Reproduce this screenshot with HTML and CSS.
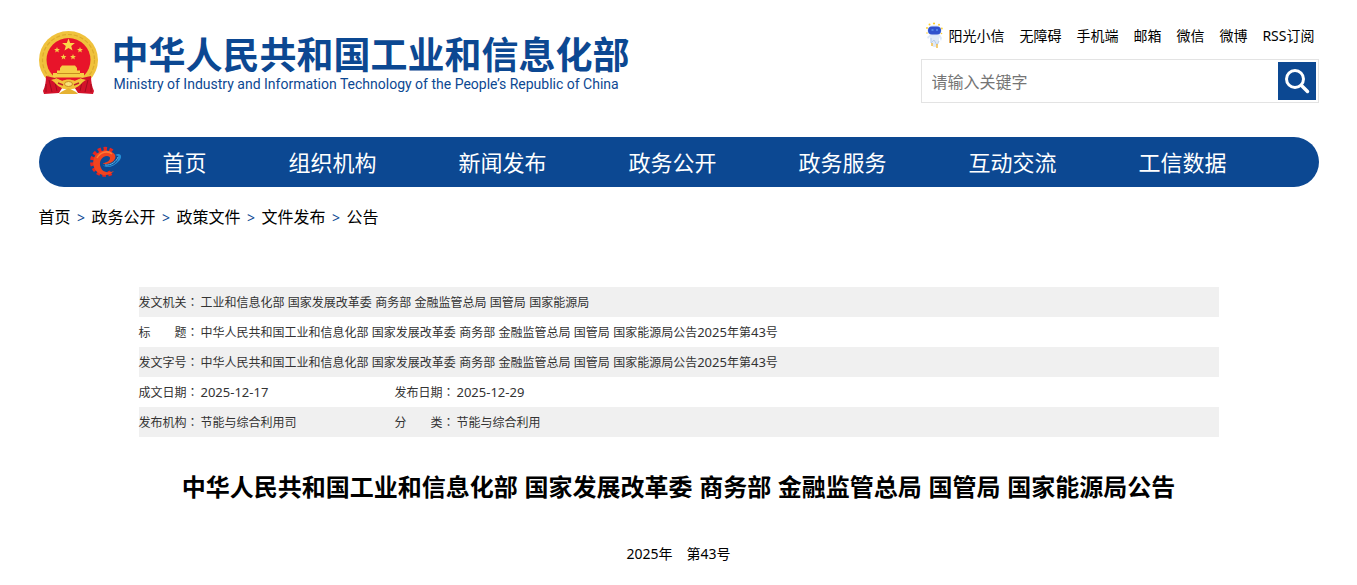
FILE: index.html
```html
<!DOCTYPE html>
<html lang="zh-CN">
<head>
<meta charset="utf-8">
<meta name="viewport" content="width=device-width, initial-scale=1">
<title>中华人民共和国工业和信息化部</title>
<link rel="stylesheet" href="styles.css">
</head>
<body>
<div class="container">
  <header class="header">
    <a class="brand" href="#">
      <svg class="emblem" viewBox="0 0 60 66" aria-hidden="true">
        <ellipse cx="29.500" cy="30" rx="29.500" ry="29" fill="#f0c23c"/>
        <ellipse cx="29.500" cy="30" rx="26" ry="25.500" fill="none" stroke="#dcab2c" stroke-width="1.200" stroke-dasharray="4 2"/>
        <circle cx="29.500" cy="30" r="22" fill="#e8142a"/>
        <path d="M29.500 8.500l1.700 4.400 4.700.2-3.700 2.900 1.300 4.600-4-2.600-4 2.600 1.300-4.600-3.700-2.900 4.700-.2z" fill="#fbd84a"/>
        <g fill="#f5cf45">
          <path id="s" d="M18 17l.8 1.900 2.100.1-1.600 1.400.5 2.100-1.800-1.200-1.800 1.200.5-2.100-1.600-1.400 2.100-.1z"/>
          <use href="#s" x="23"/><use href="#s" x="6.500" y="7"/><use href="#s" x="16" y="7"/>
          <path d="M21 38l2-2.500h13l2 2.500v2.500h3v3H18v-3h3z"/>
          <path d="M14 43h31v4.500H14z"/>
        </g>
        <path d="M18 43.500h23" stroke="#c98d20"/>
        <path d="M7 46l9 2 9 7-5 8-15 1-1-3c2-4 3-9 3-15zM52 46l-9 2-9 7 5 8 15 1 1-3c-2-4-3-9-3-15z" fill="#d3122a"/>
        <path d="M10 50l3 12M49 50l-3 12M7 54v8M52 54v8M16 52l2 9M43 52l-2 9" stroke="#a00d1f"/>
        <path d="M12 50c4-2 8-1 11 1 4-2 9-2 13 0 3-2 7-3 11-1-4 2-6 6-9 7-4 3-13 3-17 0-3-1-5-5-9-7z" fill="#f2c53b"/>
        <path d="M19 53l5 2M40 53l-5 2" stroke="#c3202a" stroke-width="1.500"/>
        <ellipse cx="29.500" cy="54" rx="4" ry="2.500" fill="#fbe27a" stroke="#c98d20"/>
        <path d="M22 62l7.500-4 7.500 4 2 2H20z" fill="#e5b132"/>
      </svg>
      <span class="brand-text">
        <span class="brand-cn">中华人民共和国工业和信息化部</span>
        <span class="brand-en" lang="en">Ministry of Industry and Information Technology of the People’s Republic of China</span>
      </span>
    </a>
    <div class="tools">
      <nav class="quick" aria-label="快捷链接">
        <a class="assistant" href="#">
          <svg class="robot" viewBox="0 0 18 26" aria-hidden="true">
            <g fill="#ffd02e"><circle cx="9" cy="1.500" r="1.100"/><circle cx="4.500" cy="2.500" r="1"/><circle cx="14" cy="2.800" r="1"/><circle cx="2" cy="6" r="1"/><circle cx="16.800" cy="6.500" r="1"/><circle cx="2" cy="11" r=".8"/><circle cx="16.500" cy="11.500" r=".8"/></g>
            <path d="M6 12L2 15l1 2 2-2 1 6 2 4h4l2-5v-5l2 4 1-3-3-5z" fill="#dfe9f7"/>
            <path d="M6 16v5l3-3 3 5 2-4" fill="none" stroke="#b8cdeb"/>
            <rect x="2.500" y="3.500" width="14" height="10" rx="5" fill="#d6e2f8"/>
            <rect x="3" y="4.500" width="13" height="8" rx="4" fill="#3051cc"/>
            <path d="M6.500 8h2M11 8h2" stroke="#6fb2ff"/>
            <path d="M7 21v3M12 22v4" stroke="#f4be48" stroke-width="1.500"/>
          </svg>阳光小信</a>
        <a href="#">无障碍</a>
        <a href="#">手机端</a>
        <a href="#">邮箱</a>
        <a href="#">微信</a>
        <a href="#">微博</a>
        <a href="#">RSS订阅</a>
      </nav>
      <form class="search">
        <input type="text" placeholder="请输入关键字" aria-label="请输入关键字">
        <button type="button" aria-label="搜索">
          <svg viewBox="0 0 38 38" aria-hidden="true"><circle cx="17" cy="17" r="8.500" fill="none" stroke="#fff" stroke-width="3"/><path d="M23.500 23.500l6 6" stroke="#fff" stroke-width="3.500" stroke-linecap="round"/></svg>
        </button>
      </form>
    </div>
  </header>

  <nav class="main-nav" aria-label="主导航">
    <svg class="gear" viewBox="0 0 34 34" aria-hidden="true">
      <path d="M24 6.500A12.500 12.500 0 1 0 25 26.500" fill="none" stroke="#e8261f" stroke-width="5" stroke-dasharray="3.200 2.300"/>
      <path d="M26 8.500C20 3 9 5 6 13c-3 9 3 17 11 17 4 0 7-2 9-4-5 2-11 2-13-3-3-6 1-12 6-12 4 0 4 4 0 6-2 1-4 1-4 1 1 2 4 1 7 0 5-2 7-6 4-9.500z" fill="#f0441f"/>
      <path d="M9 13c3-6 11-8 15-4" fill="none" stroke="#ff7a35" stroke-width="1.500"/>
      <path d="M15 20c7 4 17-3 15-9l-3-1c6-3 8 2 4 6-5 6-13 8-16 4z" fill="#268fd5"/>
      <path d="M17 20c6 1 12-4 13-8" fill="none" stroke="#65bce8"/>
    </svg>
    <a href="#">首页</a>
    <a href="#">组织机构</a>
    <a href="#">新闻发布</a>
    <a href="#">政务公开</a>
    <a href="#">政务服务</a>
    <a href="#">互动交流</a>
    <a href="#">工信数据</a>
  </nav>

  <nav class="crumbs" aria-label="当前位置">
    <a href="#">首页</a><span class="sep">&gt;</span><a href="#">政务公开</a><span class="sep">&gt;</span><a href="#">政策文件</a><span class="sep">&gt;</span><a href="#">文件发布</a><span class="sep">&gt;</span><a href="#">公告</a>
  </nav>

  <main class="article">
    <table class="meta">
      <colgroup><col class="c-label"><col class="c-value"><col class="c-label"><col></colgroup>
      <tbody>
        <tr><th scope="row">发文机关<span class="colon" lang="zh-TW">：</span></th><td colspan="3">工业和信息化部 国家发展改革委 商务部 金融监管总局 国管局 国家能源局</td></tr>
        <tr><th scope="row">标　　题<span class="colon" lang="zh-TW">：</span></th><td colspan="3">中华人民共和国工业和信息化部 国家发展改革委 商务部 金融监管总局 国管局 国家能源局公告<span class="num">2025</span>年第<span class="num">43</span>号</td></tr>
        <tr><th scope="row">发文字号<span class="colon" lang="zh-TW">：</span></th><td colspan="3">中华人民共和国工业和信息化部 国家发展改革委 商务部 金融监管总局 国管局 国家能源局公告<span class="num">2025</span>年第<span class="num">43</span>号</td></tr>
        <tr><th scope="row">成文日期<span class="colon" lang="zh-TW">：</span></th><td><span class="num">2025-12-17</span></td><th scope="row">发布日期<span class="colon" lang="zh-TW">：</span></th><td><span class="num">2025-12-29</span></td></tr>
        <tr><th scope="row">发布机构<span class="colon" lang="zh-TW">：</span></th><td>节能与综合利用司</td><th scope="row">分　　类<span class="colon" lang="zh-TW">：</span></th><td>节能与综合利用</td></tr>
      </tbody>
    </table>
    <h1 class="title">中华人民共和国工业和信息化部 国家发展改革委 商务部 金融监管总局 国管局 国家能源局公告</h1>
    <p class="issue">2025年　第43号</p>
  </main>
</div>
</body>
</html>
```
FILE: styles.css
```css
* { box-sizing: border-box; }

body {
  margin: 0;
  background: #fff;
  color: #000;
  font-family: "Noto Sans", "Noto Sans CJK SC", sans-serif;
  font-size: 14px;
}

a { color: inherit; text-decoration: none; }

.container {
  max-width: 1280px;
  margin: 0 auto;
}

.header {
  display: flex;
  justify-content: space-between;
  align-items: flex-start;
  padding: 22px 0 34px;
}

.brand {
  display: flex;
  gap: 13px;
  padding-top: 8px;
  color: #0c4892;
}

.emblem { width: 60px; height: 66px; }

.brand-text {
  display: flex;
  flex-direction: column;
  padding-top: 7px;
}

.brand-cn {
  font-family: "Liberation Sans", "Noto Sans CJK SC", sans-serif;
  font-size: 37px;
  font-weight: 700;
  line-height: 40px;
  white-space: nowrap;
}

.brand-en {
  padding-left: 2px;
  font-family: Roboto, sans-serif;
  font-size: 14px;
  line-height: 14px;
  white-space: nowrap;
}

.tools { width: 398px; }

.quick {
  display: flex;
  justify-content: flex-end;
  align-items: center;
  gap: 15px;
  height: 26px;
  padding-right: 4px;
  white-space: nowrap;
}

.assistant { display: flex; align-items: center; gap: 5px; }

.robot { width: 18px; height: 26px; }

.search {
  display: flex;
  align-items: center;
  height: 44px;
  margin-top: 11px;
  padding-right: 2px;
  border: 1px solid #e3e3e3;
}

.search input {
  flex: 1;
  min-width: 0;
  height: 40px;
  padding: 2px 10px 0;
  border: 0;
  outline: 0;
  background: transparent;
  font: inherit;
  font-size: 16px;
}

.search input::placeholder { color: #757575; }

.search button {
  width: 38px;
  height: 38px;
  padding: 0;
  border: 0;
  background: #0c4892;
}

.search svg { display: block; }

.main-nav {
  display: flex;
  align-items: center;
  height: 50px;
  padding-left: 49px;
  border-radius: 25px;
  background: #0c4892;
  color: #fff;
  font-family: "Liberation Sans", "Noto Sans CJK SC", sans-serif;
  font-size: 22px;
}

.main-nav a { padding: 0 41px 2px; white-space: nowrap; }

.gear { width: 34px; height: 34px; }

.crumbs {
  padding-top: 18px;
  font-size: 16px;
  line-height: 24px;
}

.sep {
  display: inline-block;
  width: 21px;
  color: #0c4892;
  font-size: 14px;
  text-align: center;
}

.article {
  max-width: 1080px;
  margin: 57px auto 0;
}

.meta {
  width: 100%;
  table-layout: fixed;
  border-collapse: collapse;
  color: #333;
  font-size: 12px;
}

.c-label { width: 62px; }
.c-value { width: 194px; }

.meta tr:nth-child(odd) { background: #f0f0f0; }

.meta th,
.meta td {
  height: 30px;
  padding: 5px 0 4px;
  font-weight: 400;
  line-height: 20px;
  text-align: left;
  vertical-align: baseline;
  white-space: nowrap;
}

.meta td { font-family: "Liberation Sans", "Noto Sans CJK SC", sans-serif; }

.meta .num { font-family: "Noto Sans", sans-serif; font-size: 13px; }

.colon { font-family: "Noto Sans CJK TC", sans-serif; }

.title {
  margin: 33px 0 0;
  font-family: "Liberation Sans", "Noto Sans CJK SC", sans-serif;
  font-size: 24px;
  line-height: 36px;
  text-align: center;
}

.issue {
  margin: 36px 0 0;
  line-height: 24px;
  text-align: center;
}
```
